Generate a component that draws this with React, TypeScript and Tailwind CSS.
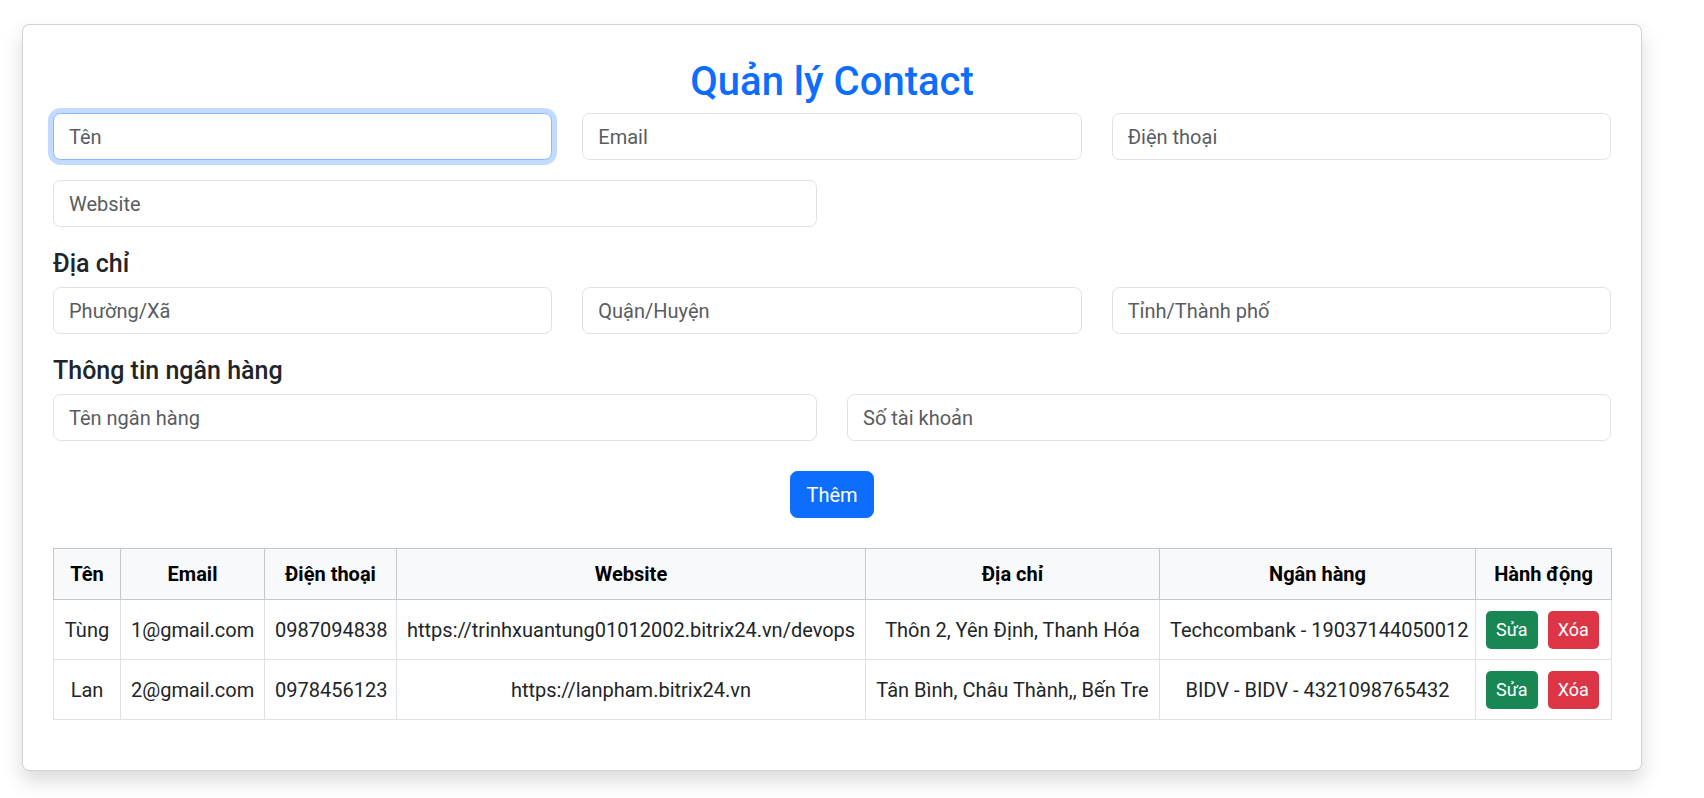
import { useState } from 'react';

type Contact = {
  id: number;
  name: string;
  email: string;
  phone: string;
  website: string;
  address: string;
  bank: string;
};

const initialContacts: Contact[] = [
  {
    id: 1,
    name: 'Tùng',
    email: '1@gmail.com',
    phone: '0987094838',
    website: 'https://trinhxuantung01012002.bitrix24.vn/devops',
    address: 'Thôn 2, Yên Định, Thanh Hóa',
    bank: 'Techcombank - 19037144050012',
  },
  {
    id: 2,
    name: 'Lan',
    email: '2@gmail.com',
    phone: '0978456123',
    website: 'https://lanpham.bitrix24.vn',
    address: 'Tân Bình, Châu Thành,, Bến Tre',
    bank: 'BIDV - BIDV - 4321098765432',
  },
];

const inputClass =
  'w-full h-[47px] px-[15px] text-[20px] leading-[30px] text-[#212529] bg-white border border-[#dee2e6] rounded-[7.5px] outline-none placeholder:text-[#595c5f]';

const Field = ({ placeholder, focused }: { placeholder: string; focused?: boolean }) => (
  <input
    type="text"
    placeholder={placeholder}
    className={
      focused
        ? `${inputClass} !border-[#86b7fe] shadow-[0_0_0_5px_rgba(13,110,253,0.25)]`
        : inputClass
    }
  />
);

const cellClass = 'border border-[#dee2e6] px-[10px] h-[60px] align-middle whitespace-nowrap';

const App = () => {
  const [contacts] = useState<Contact[]>(initialContacts);

  return (
    <div className="min-h-screen bg-white text-[#212529] font-['Roboto','Noto_Sans',sans-serif]">
      <div className="ml-[22px] pt-[24px] w-[1620px]">
        <div className="bg-white border border-[rgba(0,0,0,0.175)] rounded-[7.5px] shadow-[0_10px_20px_rgba(0,0,0,0.15)] p-[30px]">
          <h2 className="text-center text-[40px] leading-[48px] font-medium text-[#0d6efd] pt-[3px] mb-[7px]">
            Quản lý Contact
          </h2>

          {/* thông tin cơ bản */}
          <div className="grid grid-cols-3 gap-x-[30px] mb-[20px]">
            <Field placeholder="Tên" focused />
            <Field placeholder="Email" />
            <Field placeholder="Điện thoại" />
          </div>
          <div className="grid grid-cols-2 gap-x-[30px] mb-[20px]">
            <Field placeholder="Website" />
          </div>

          <h5 className="text-[25px] leading-[30px] font-medium pt-[2px] mb-[8px]">Địa chỉ</h5>
          <div className="grid grid-cols-3 gap-x-[30px] mb-[20px]">
            <Field placeholder="Phường/Xã" />
            <Field placeholder="Quận/Huyện" />
            <Field placeholder="Tỉnh/Thành phố" />
          </div>

          <h5 className="text-[25px] leading-[30px] font-medium pt-[2px] mb-[8px]">Thông tin ngân hàng</h5>
          <div className="grid grid-cols-2 gap-x-[30px]">
            <Field placeholder="Tên ngân hàng" />
            <Field placeholder="Số tài khoản" />
          </div>

          <div className="flex justify-center mt-[30px] mb-[30px]">
            <button className="h-[47px] px-[15px] text-[20px] text-white bg-[#0d6efd] rounded-[7.5px] border border-[#0d6efd]">
              Thêm
            </button>
          </div>

          <table className="w-full table-fixed border-collapse text-[20px] leading-[30px] mb-[20px]">
            <colgroup>
              <col className="w-[67px]" />
              <col className="w-[144px]" />
              <col className="w-[132px]" />
              <col className="w-[469px]" />
              <col className="w-[294px]" />
              <col className="w-[316px]" />
              <col className="w-[136px]" />
            </colgroup>
            <thead>
              <tr className="bg-[#f8f9fa]">
                {['Tên', 'Email', 'Điện thoại', 'Website', 'Địa chỉ', 'Ngân hàng', 'Hành động'].map((h) => (
                  <th
                    key={h}
                    className="border border-[#c6c7c8] px-[10px] h-[51px] font-bold text-black text-center whitespace-nowrap"
                  >
                    {h}
                  </th>
                ))}
              </tr>
            </thead>
            <tbody>
              {contacts.map((c) => (
                <tr key={c.id} className="text-center">
                  <td className={cellClass}>{c.name}</td>
                  <td className={cellClass}>{c.email}</td>
                  <td className={cellClass}>{c.phone}</td>
                  <td className={cellClass}>{c.website}</td>
                  <td className={cellClass}>{c.address}</td>
                  <td className={cellClass}>{c.bank}</td>
                  <td className={`${cellClass} text-left`}>
                    <button className="h-[38px] px-[10px] text-[18px] text-white bg-[#198754] rounded-[5px] mr-[10px] align-middle">
                      Sửa
                    </button>
                    <button className="h-[38px] px-[10px] text-[18px] text-white bg-[#dc3545] rounded-[5px] align-middle">
                      Xóa
                    </button>
                  </td>
                </tr>
              ))}
            </tbody>
          </table>
        </div>
      </div>
    </div>
  );
};

export default App;
